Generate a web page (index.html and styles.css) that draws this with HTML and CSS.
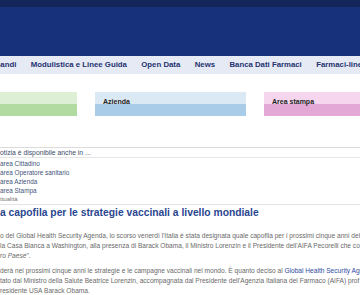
FILE: index.html
```html
<!DOCTYPE html>
<html>
<head>
    <title>AIFA - Notizia</title>
    <link rel="stylesheet" href="styles.css">
</head>
<body>
    <div class="topbar"></div>
    <div class="header"></div>

    <ul class="nav">
        <li class="nav-first">Bandi</li>
        <li>Modulistica e Linee Guida</li>
        <li>Open Data</li>
        <li>News</li>
        <li>Banca Dati Farmaci</li>
        <li>Farmaci-line</li>
    </ul>

    <div class="areas">
        <div class="area area-green"><span class="area-label">Cittadino</span></div>
        <div class="area area-blue"><span class="area-label">Azienda</span></div>
        <div class="area area-pink"><span class="area-label">Area stampa</span></div>
    </div>

    <div class="content">
        <div class="notice">otizia è disponibile anche in ...</div>
        <ul class="also-in">
            <li>area Cittadino</li>
            <li>area Operatore sanitario</li>
            <li>area Azienda</li>
            <li>area Stampa</li>
        </ul>
        <div class="category">ttualità</div>

        <h1 class="title">a capofila per le strategie vaccinali a livello mondiale</h1>

        <p class="text">
            o del Global Health Security Agenda, lo scorso venerdì l'Italia è stata designata quale capofila per i prossimi cinque anni del<br>
            la Casa Bianca a Washington, alla presenza di Barack Obama, il Ministro Lorenzin e il Presidente dell'AIFA Pecorelli che co<br>
            ro <em>Paese</em>".
        </p>
        <p class="text">
            derà nei prossimi cinque anni le strategie e le campagne vaccinali nel mondo. È quanto deciso al <a href="#">Global Health Security Agenda</a><br>
            tato dal Ministro della Salute Beatrice Lorenzin, accompagnata dal Presidente dell'Agenzia Italiana del Farmaco (AIFA) prof<br>
            residente USA Barack Obama.
        </p>
    </div>
</body>
</html>
```

FILE: styles.css
```css
body {
    margin: 0;
    font-family: "Liberation Sans", Arial, sans-serif;
    background: #ffffff;
    overflow: hidden;
}

.topbar {
    height: 7px;
    background-color: #14255a;
}

.header {
    height: 49px;
    background-color: #17327a;
}

.nav {
    display: flex;
    margin: 0;
    padding: 0;
    list-style: none;
    height: 18px;
    background-color: #e6eaf4;
    white-space: nowrap;
}

.nav li {
    padding: 0 7.2px;
    font-size: 7.8px;
    line-height: 18px;
    font-weight: bold;
    color: #1f3370;
}

.nav .nav-first {
    margin-left: -12.5px;
}

.areas {
    display: flex;
    gap: 18px;
    margin: 18px 0 0 -74px;
}

.area {
    flex: 0 0 151px;
    height: 24px;
    box-sizing: border-box;
    padding: 6px 0 0 8px;
}

.area-label {
    display: block;
    font-size: 7px;
    line-height: 7px;
    font-weight: bold;
    color: #222222;
}

.area-green {
    background: linear-gradient(#ddf0d6 50%, #b2dba2 50%);
}

.area-green .area-label {
    visibility: hidden;
}

.area-blue {
    background: linear-gradient(#dbe9f5 50%, #a9cde9 50%);
}

.area-pink {
    background: linear-gradient(#f5d6ee 50%, #e3a8d6 50%);
}

.content {
    margin-top: 31px;
    white-space: nowrap;
}

.notice {
    border-top: 1px solid #dcdcdc;
    border-bottom: 1px solid #e6e6e6;
    font-size: 6.8px;
    line-height: 9px;
    color: #3e4c6a;
}

.also-in {
    list-style: none;
    margin: 1px 0 0 0;
    padding: 0;
}

.also-in li {
    font-size: 6.4px;
    line-height: 9px;
    color: #44557a;
}

.category {
    font-size: 6px;
    line-height: 9px;
    color: #777777;
}

.title {
    margin: 0;
    padding-top: 2px;
    border-top: 1px solid #e4e4e4;
    font-size: 10.3px;
    line-height: 12px;
    font-weight: bold;
    color: #2a4690;
}

.text {
    margin: 12px 0 0 0;
    font-size: 6.6px;
    line-height: 10px;
    color: #6a6a6a;
}

.text + .text {
    margin-top: 5px;
}

.text a {
    color: #2d4aa0;
    text-decoration: none;
}
```
